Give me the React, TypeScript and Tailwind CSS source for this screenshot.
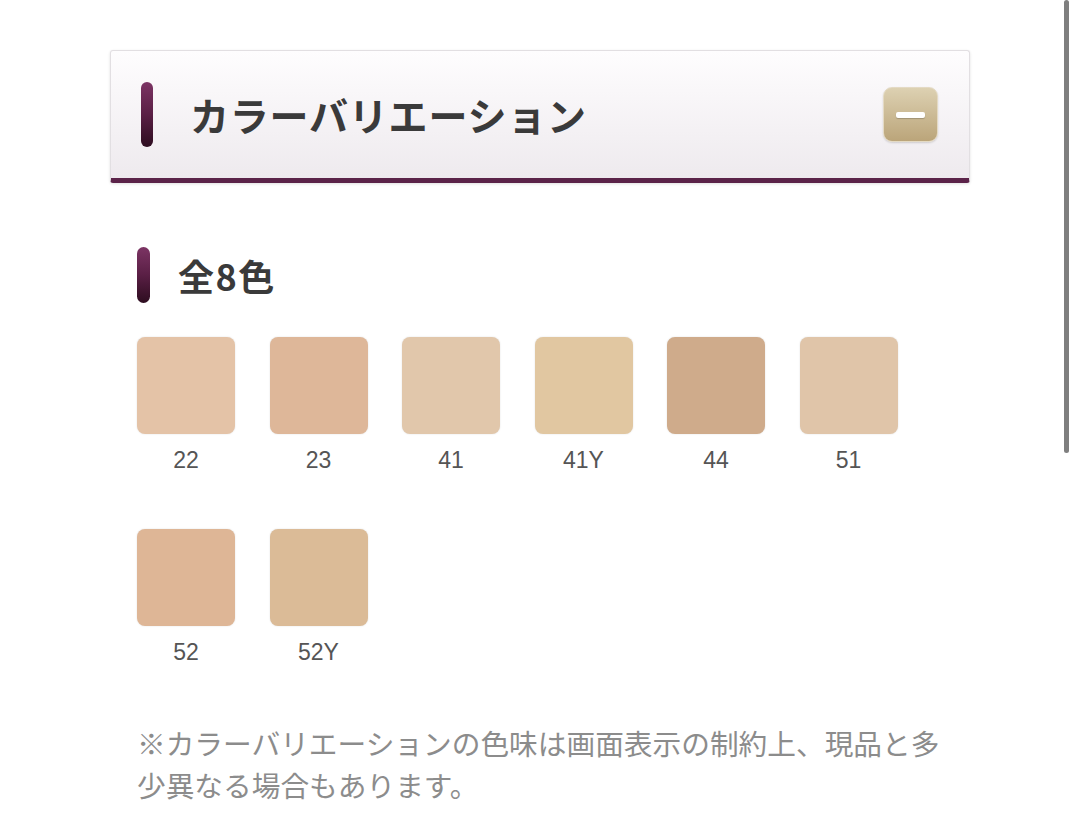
const swatches = [
  { code: '22', color: '#e4c3a7' },
  { code: '23', color: '#deb799' },
  { code: '41', color: '#e1c7ab' },
  { code: '41Y', color: '#e1c7a1' },
  { code: '44', color: '#cfab8b' },
  { code: '51', color: '#e0c5a9' },
  { code: '52', color: '#deb696' },
  { code: '52Y', color: '#dbbb97' },
];

function AccentBar({ className }: { className: string }) {
  return (
    <div
      className={`rounded-full bg-gradient-to-b from-[#7c3464] via-[#5a1f45] to-[#2e0d20] ${className}`}
    />
  );
}

export default function App() {
  return (
    <div className="relative min-h-[837px] w-[1080px] bg-white font-['Noto_Sans_CJK_JP','Noto_Sans',sans-serif]">
      {/* scroll indicator */}
      <div className="absolute right-[11px] top-0 h-[453px] w-[5px] rounded-full bg-[#7f7f7f]" />

      <div className="w-[970px] pl-[110px] pt-[50px]">
        {/* accordion header */}
        <div className="flex h-[133px] items-center justify-between rounded-[3px] border border-[#e2dfe2] border-b-[5px] border-b-[#5b2349] bg-gradient-to-b from-[#fefdfe] to-[#eeeaee] pl-[30px] pr-[31px] shadow-[0_1px_3px_rgba(0,0,0,0.12)]">
          <div className="flex items-center gap-[37px]">
            <AccentBar className="h-[65px] w-[12px]" />
            <h2 className="text-[39px] font-bold tracking-[0.8px] text-[#3a3a3a]">カラーバリエーション</h2>
          </div>
          <button className="flex h-[55px] w-[55px] items-center justify-center rounded-[9px] border border-[#e4dac4] bg-gradient-to-b from-[#ddd1b2] to-[#bba57a] shadow-[0_1px_2px_rgba(0,0,0,0.15)]">
            <span className="h-[6px] w-[29px] rounded-[2px] bg-white shadow-[0_1px_1px_rgba(0,0,0,0.2)]" />
          </button>
        </div>

        {/* swatches */}
        <div className="pl-[27px] pt-[64px]">
          <div className="flex items-center gap-[28px]">
            <AccentBar className="h-[56px] w-[13px]" />
            <h3 className="text-[36px] font-bold tracking-[1.5px] text-[#3a3a3a]">全8色</h3>
          </div>

          <div className="mt-[34px] grid grid-cols-[repeat(6,98px)] gap-x-[34.5px] gap-y-[55px]">
            {swatches.map((s) => (
              <div key={s.code} className="flex flex-col items-center">
                <div
                  className="h-[97px] w-[98px] rounded-[8px] shadow-[0_0_2px_rgba(0,0,0,0.12)]"
                  style={{ backgroundColor: s.color }}
                />
                <span className="mt-[12px] font-['Liberation_Sans',sans-serif] text-[23px] leading-[28px] text-[#555555]">
                  {s.code}
                </span>
              </div>
            ))}
          </div>

          <p className="mt-[56px] text-[28.7px] leading-[42px] text-[#8c8c8c]">
            ※カラーバリエーションの色味は画面表示の制約上、現品と多
            <br />
            少異なる場合もあります。
          </p>
        </div>
      </div>
    </div>
  );
}
